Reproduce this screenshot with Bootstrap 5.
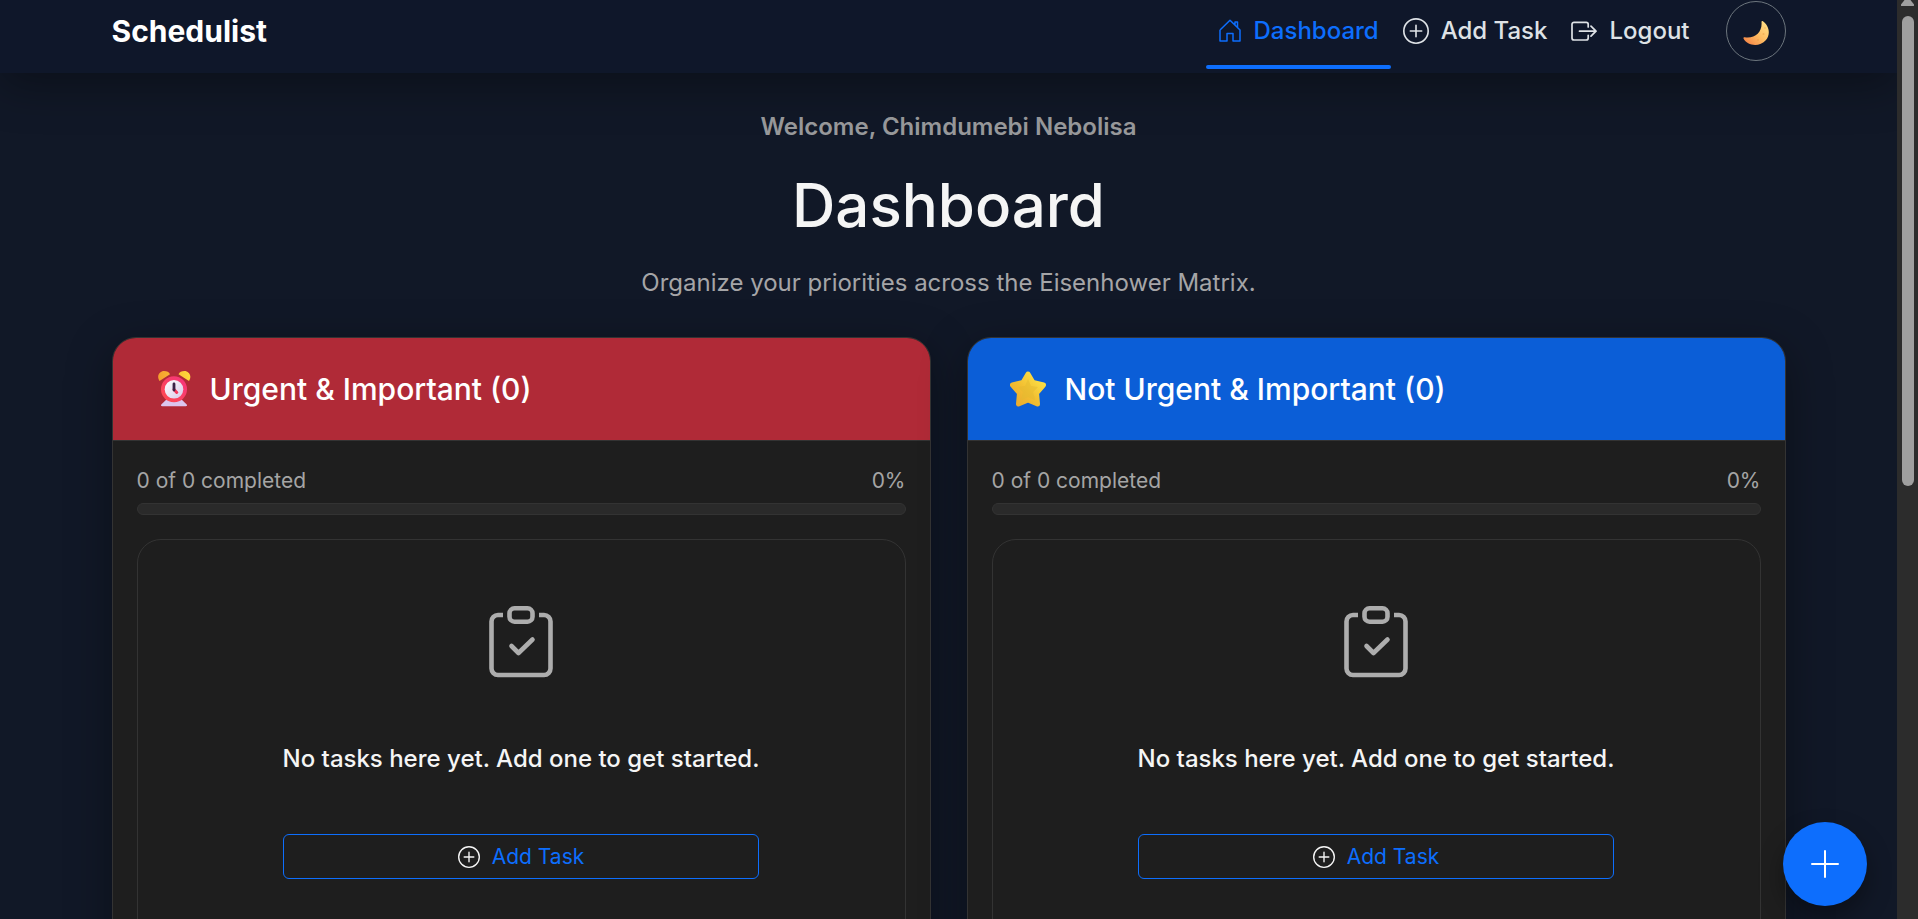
<!DOCTYPE html>
<html lang="en" data-bs-theme="dark">
<head>
<meta charset="utf-8">
<meta name="viewport" content="width=device-width, initial-scale=1">
<title>Schedulist</title>
<link rel="stylesheet" href="https://cdn.jsdelivr.net/npm/bootstrap@5.3.0/dist/css/bootstrap.min.css">
<style>
:root{font-size:24px}
body{font-family:Inter,"Liberation Sans",sans-serif;background:#111827;color:#f5f5f5;overflow:hidden}
.app-scroll{min-width:0;overflow:hidden}
.page-wrap{width:100%;max-width:1710px;margin-inline:auto;padding-inline:18px}
.topbar{padding:1px 0 12px;background:#0f172a;box-shadow:0 12px 45px rgba(0,0,0,.35);position:relative;z-index:1}
.brand{font-size:30px;line-height:45px;font-weight:700;color:#fff;text-decoration:none}
.topbar .nav-link{display:flex;align-items:center;gap:12px;padding:6px 12px;font-size:24px;line-height:36px;font-weight:500;color:#dee2e6;position:relative}
.topbar .nav-link.active{color:#0d6efd}
.topbar .nav-link.active::after{content:"";position:absolute;left:0;right:0;bottom:-14px;height:4px;border-radius:2px;background:#0d6efd}
.theme-btn{width:60px;height:60px;padding:0;border:1px solid #6c757d;border-radius:50%;background:transparent;margin-left:24px}
.dash-main{padding-top:36px}
.welcome{font-size:24px;line-height:36px;font-weight:600;color:#98999b}
.page-title{font-size:60px;line-height:72px;font-weight:500;color:#f5f5f5;margin-bottom:24px}
.intro{font-size:24px;line-height:36px;color:#a5a5a7;margin-bottom:36px}
.quad{background:#1e1e1e;border:1px solid #333;border-radius:24px;box-shadow:0 12px 45px rgba(0,0,0,.35);overflow:hidden}
.quad-head{padding:30px 42px;gap:18px;border-bottom:1px solid #333}
.quad-head svg{margin-block:1px}
.quad-head h2{font-size:30px;line-height:42px;font-weight:500;color:#fff}
.head-danger{background:#b02a37}
.head-primary{background:#0b5ed7}
.quad-body{padding:24px}
.stat{font-size:21px;line-height:32px;color:#a5a5a5;margin-bottom:6px}
.meter{height:12px;border:1px solid #333;border-radius:6px;background:#2a2a2a;margin-bottom:24px}
.empty{border:1px solid #333;border-radius:24px;padding:66px 24px;color:#f5f5f5}
.empty-icon{color:#adadad;margin-bottom:63px}
.empty p{font-size:24px;line-height:36px;font-weight:500;margin-bottom:57px}
.empty .btn{font-size:21px;line-height:31px;padding:6px 12px;border-radius:6px;gap:12px;--bs-btn-color:#0d6efd;--bs-btn-border-color:#0d6efd}
.fab{position:fixed;right:51px;bottom:13px;width:84px;height:84px;padding:0;border:0;border-radius:50%;background:#0d6efd;box-shadow:0 12px 24px rgba(0,0,0,.35);z-index:2}
.scroll-rail{width:21px;background:#2c2c2c}
.scroll-thumb{width:12px;height:470px;border-radius:6px;background:#9f9f9f}
</style>
</head>
<body class="d-flex vh-100">
<svg class="position-absolute" width="0" height="0" aria-hidden="true">
<symbol id="plus-circle" viewBox="0 0 16 16"><path d="M8 15A7 7 0 1 1 8 1a7 7 0 0 1 0 14m0 1A8 8 0 1 0 8 0a8 8 0 0 0 0 16"/><path d="M8 4a.5.5 0 0 1 .5.5v3h3a.5.5 0 0 1 0 1h-3v3a.5.5 0 0 1-1 0v-3h-3a.5.5 0 0 1 0-1h3v-3A.5.5 0 0 1 8 4"/></symbol>
<symbol id="clipboard" viewBox="0 0 64 72"><g fill="none" stroke="currentColor" stroke-width="4.600"><path d="M14 9H9a6.500 6.500 0 0 0-6.500 6.500v47A6.500 6.500 0 0 0 9 69h46a6.500 6.500 0 0 0 6.500-6.500v-47A6.500 6.500 0 0 0 55 9h-5"/><rect x="20.500" y="2.300" width="23" height="13.400" rx="5"/><path d="m22.500 40 7 7 14-13.500" stroke-linecap="round" stroke-linejoin="round"/></g></symbol>
</svg>
<div class="app-scroll flex-grow-1">
<nav class="topbar" aria-label="Main"><div class="page-wrap d-flex align-items-center justify-content-between">
<a class="brand" href="#">Schedulist</a>
<div class="d-flex align-items-center">
<a class="nav-link active" href="#" aria-current="page"><svg width="24" height="24" viewBox="0 0 24 24" fill="none" stroke="currentColor" stroke-width="1.500" stroke-linejoin="round"><path d="M2 11v11h7v-7.500h6V22h7V11L12 1.200 2 11M17 5.500V3h2.500v5.300"/></svg>Dashboard</a>
<a class="nav-link" href="#"><svg width="26" height="26" fill="currentColor"><use href="#plus-circle"/></svg>Add Task</a>
<a class="nav-link" href="#"><svg width="26" height="24" viewBox="0 0 26 24" fill="none" stroke="currentColor" stroke-width="1.700" stroke-linecap="round" stroke-linejoin="round"><path d="M17.200 8V5.300a2 2 0 0 0-2-2H3a2 2 0 0 0-2 2V19a2 2 0 0 0 2 2h12.200a2 2 0 0 0 2-2v-2.700M8.500 12.200H25m-5-5 5 5-5 5"/></svg>Logout</a>
<button class="theme-btn d-flex align-items-center justify-content-center" type="button" aria-label="Toggle theme"><svg width="26" height="28" viewBox="0 0 26 28"><defs><linearGradient id="moon" x1="0" y1="1" x2="1" y2="0"><stop stop-color="#f47b42"/><stop offset=".5" stop-color="#fdbc62"/><stop offset="1" stop-color="#ffe58c"/></linearGradient></defs><path fill="url(#moon)" d="M19.500 4C26 8 28 17 23 23 16 31 4 28.500.5 21.500c-.3-1 .3-1.500 1.200-1.200C12 22 19.500 15 18.500 5c0-.9.4-1.300 1-1Z"/><g fill="#e89c48" opacity=".5"><circle cx="20.500" cy="17" r="1"/><circle cx="15" cy="23" r="1"/><circle cx="22" cy="11" r=".8"/></g></svg></button>
</div></div></nav>
<main class="page-wrap dash-main text-center">
<p class="welcome mb-3">Welcome, Chimdumebi Nebolisa</p>
<h1 class="page-title">Dashboard</h1>
<p class="intro">Organize your priorities across the Eisenhower Matrix.</p>
<div class="row">
<section class="col-6"><div class="quad">
<div class="quad-head head-danger d-flex align-items-center"><svg width="37" height="40" viewBox="0 0 37 40" aria-hidden="true"><defs><linearGradient id="bell"><stop stop-color="#f59e2e"/><stop offset="1" stop-color="#ffd93b"/></linearGradient><linearGradient id="rim" x1="0" y1="1" x2="1" y2="0"><stop stop-color="#ff4c4c"/><stop offset="1" stop-color="#f43380"/></linearGradient><linearGradient id="face" x1="0" y1="0" x2="1" y2="1"><stop stop-color="#fff"/><stop offset="1" stop-color="#d9c9e8"/></linearGradient></defs><path fill="#dcc5ee" d="M12 30h14l5.500 5.200c1 1 .5 2-.8 2H7.300c-1.300 0-1.800-1-.8-2Z"/><path fill="url(#bell)" d="M4.500 12C1 6.500 5 2 9 2c3 0 5 1.200 6 3.200ZM34 12c3.500-5.500-.5-10-4.500-10-3 0-5 1.200-6 3.200Z"/><circle cx="19" cy="20.300" r="13" fill="url(#rim)"/><circle cx="19" cy="20.300" r="9.300" fill="url(#face)"/><path d="m19 20.500 2.800 3" stroke="#f5395c" stroke-width="3" stroke-linecap="round"/><path d="M19 15v6" stroke="#3b2347" stroke-width="2.800" stroke-linecap="round"/></svg><h2 class="mb-0">Urgent &amp; Important (0)</h2></div>
<div class="quad-body"><div class="stat d-flex justify-content-between"><span>0 of 0 completed</span><span>0%</span></div>
<div class="meter" role="progressbar" aria-label="Urgent and important progress" aria-valuenow="0" aria-valuemin="0" aria-valuemax="100"></div>
<div class="empty d-flex justify-content-center"><div class="d-flex flex-column"><svg class="empty-icon align-self-center" width="64" height="72" aria-hidden="true"><use href="#clipboard"/></svg><p>No tasks here yet. Add one to get started.</p><button class="btn btn-outline-primary d-flex align-items-center justify-content-center" type="button"><svg width="22" height="22" fill="#f5f5f5"><use href="#plus-circle"/></svg>Add Task</button></div></div></div>
</div></section>
<section class="col-6"><div class="quad">
<div class="quad-head head-primary d-flex align-items-center"><svg width="37" height="40" viewBox="0 0 37 40" aria-hidden="true"><defs><linearGradient id="star" x1="0" y1="1" x2="1" y2="0"><stop stop-color="#e9a92e"/><stop offset=".45" stop-color="#f2bf32"/><stop offset="1" stop-color="#ffe94a"/></linearGradient></defs><path d="M18 5 23 13.500 33.500 16 26.500 24 27.500 35 18 31 8.500 35 9.500 24 2.500 16 13 13.500Z" fill="url(#star)" stroke="url(#star)" stroke-width="5" stroke-linejoin="round"/><path d="m18 10 3 7 7 1-5 5 2 8-7-3-7 3 2-8-5-5 7-1Z" fill="#e3b92f" opacity=".5"/></svg><h2 class="mb-0">Not Urgent &amp; Important (0)</h2></div>
<div class="quad-body"><div class="stat d-flex justify-content-between"><span>0 of 0 completed</span><span>0%</span></div>
<div class="meter" role="progressbar" aria-label="Not urgent and important progress" aria-valuenow="0" aria-valuemin="0" aria-valuemax="100"></div>
<div class="empty d-flex justify-content-center"><div class="d-flex flex-column"><svg class="empty-icon align-self-center" width="64" height="72" aria-hidden="true"><use href="#clipboard"/></svg><p>No tasks here yet. Add one to get started.</p><button class="btn btn-outline-primary d-flex align-items-center justify-content-center" type="button"><svg width="22" height="22" fill="#f5f5f5"><use href="#plus-circle"/></svg>Add Task</button></div></div></div>
</div></section>
</div>
</main></div>
<button class="fab d-flex align-items-center justify-content-center" type="button" aria-label="Add task"><svg width="28" height="28" viewBox="0 0 28 28" stroke="#fff" stroke-width="2" stroke-linecap="round"><path d="M14 1v26M1 14h26"/></svg></button>
<div class="scroll-rail flex-shrink-0 d-flex flex-column align-items-center" aria-hidden="true"><svg class="flex-shrink-0" width="13" height="16" viewBox="0 0 13 16" fill="#9f9f9f"><path d="M3.500 0h6L13 4.500c.5 1 0 1.500-1 1.500H1C0 6-.5 5.500 0 4.500Z"/></svg><div class="scroll-thumb"></div></div>
<script src="https://cdn.jsdelivr.net/npm/bootstrap@5.3.0/dist/js/bootstrap.bundle.min.js"></script>
</body>
</html>
